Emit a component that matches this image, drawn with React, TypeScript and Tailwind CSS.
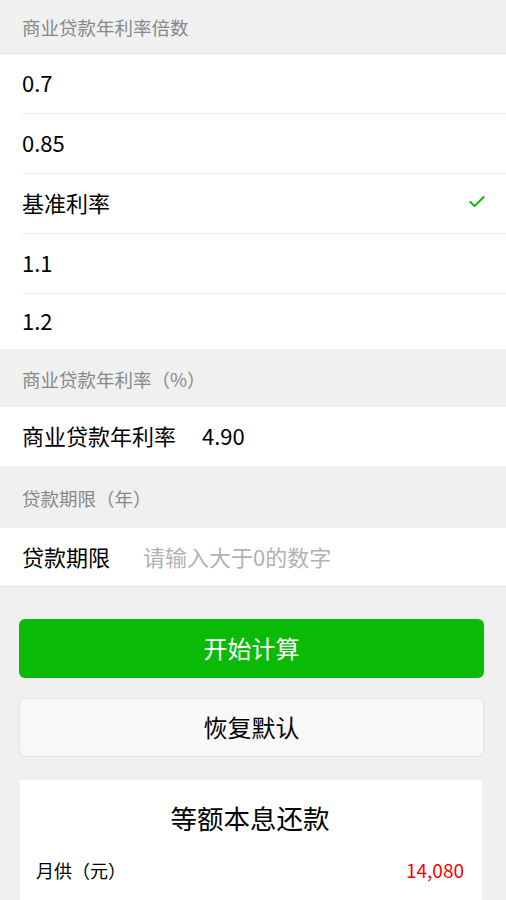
import { Check } from "lucide-react";

const multiples = ["0.7", "0.85", "基准利率", "1.1", "1.2"];

function SectionTitle({ text, height }: { text: string; height: string }) {
  return (
    <div className={`${height} flex items-center pt-[3px] px-[22px] text-[18.5px] text-[#888888] bg-[#f0f0f0]`}>
      {text}
    </div>
  );
}

export default function App() {
  const selected = "基准利率";

  return (
    <div
      className="min-h-[900px] w-[506px] bg-[#f0f0f0] overflow-hidden"
      style={{ fontFamily: '"Noto Sans CJK SC", "Noto Sans", sans-serif' }}
    >
      <SectionTitle text="商业贷款年利率倍数" height="h-[53px]" />

      {/* multiple choice list */}
      <div className="bg-white border-t border-[#e2e2e2]">
        {multiples.map((m, i) => (
          <div key={m} className="pl-[22px]">
            <div
              className={`flex items-center justify-between pr-[19px] pb-[3px] text-[22px] text-black ${
                i < multiples.length - 1 ? "h-[60px] border-b border-[#ececec]" : "h-[55px]"
              }`}
            >
              <span>{m}</span>
              {m === selected && <Check className="w-[20px] h-[20px] text-[#09bb07]" strokeWidth={2.4} />}
            </div>
          </div>
        ))}
      </div>

      <SectionTitle text="商业贷款年利率（%）" height="h-[58px]" />
      <div className="h-[59px] bg-white flex items-center pb-[2px] px-[22px] text-[22px] text-black">
        <span className="mr-[26px]">商业贷款年利率</span>
        <span>4.90</span>
      </div>

      <SectionTitle text="贷款期限（年）" height="h-[62px]" />
      <div className="h-[59px] bg-white flex items-center pb-[2px] px-[22px] text-[22px] border-b border-[#e2e2e2]">
        <span className="text-black mr-[33px]">贷款期限</span>
        <span className="text-[#b2b2b2]">请输入大于0的数字</span>
      </div>

      {/* actions */}
      <div className="pl-[19px] pr-[22px] pt-[32px] flex flex-col gap-[20px]">
        <button className="h-[59px] rounded-[6px] bg-[#09bb07] text-white text-[24px] pb-[2px]">开始计算</button>
        <button className="h-[59px] rounded-[6px] bg-[#f8f8f8] border border-[#e3e3e3] text-black text-[24px] pb-[2px]">
          恢复默认
        </button>
      </div>

      {/* result card */}
      <div className="ml-[20px] mr-[24px] mt-[23px] bg-white pl-[16px] pr-[18px] pt-[20px] pb-[20px]">
        <div className="text-center text-[26.5px] text-black leading-[36px]">等额本息还款</div>
        <div className="mt-[20px] flex items-center justify-between">
          <span className="text-black text-[18px]">月供（元）</span>
          <span className="text-[#ff0000] text-[19px]">14,080</span>
        </div>
      </div>
    </div>
  );
}
